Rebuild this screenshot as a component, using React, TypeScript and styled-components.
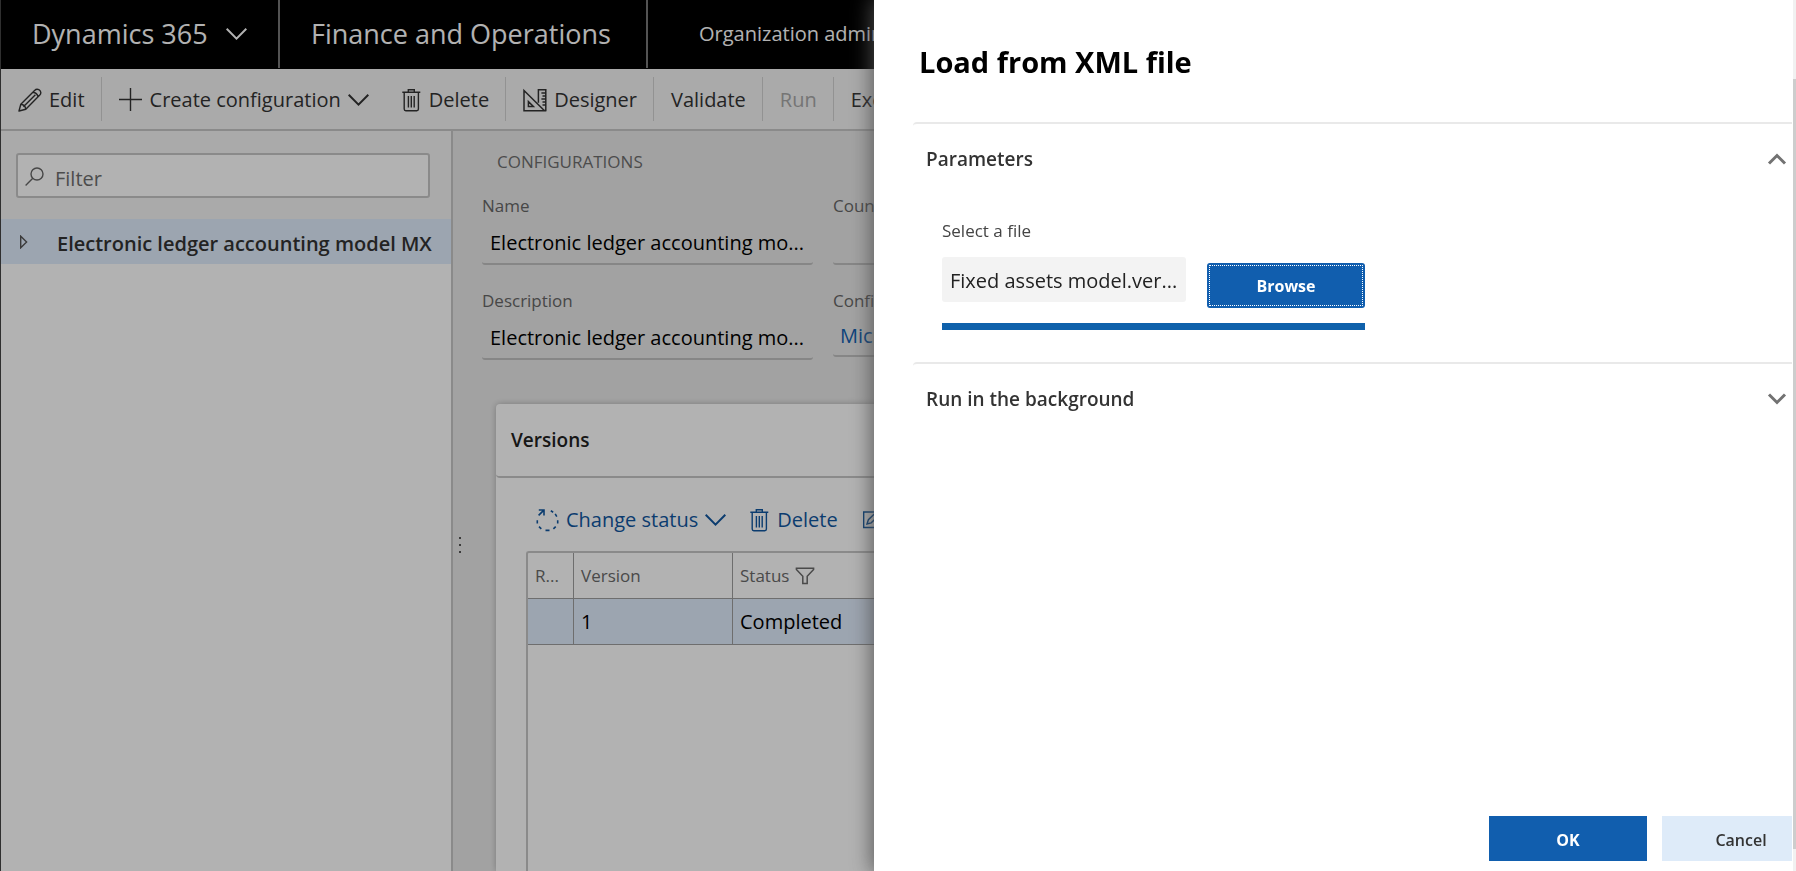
import React from "react";
import styled, { createGlobalStyle, css } from "styled-components";

const GlobalStyle = createGlobalStyle`
  *, *::before, *::after { box-sizing: border-box; }
  body {
    margin: 0;
    font-family: "Open Sans", "Noto Sans", sans-serif;
    font-size: 20px;
    line-height: 28px;
    color: #333;
    background: #fff;
  }
  button, input { font: inherit; color: inherit; }
  button { cursor: pointer; }
`;

/* ---------- page shell ---------- */

const Page = styled.div`
  display: flex;
  flex-direction: column;
  height: 100vh;
  overflow: hidden;
  border-left: 1px solid #444;
  background: #fff;
`;

const TopBar = styled.header`
  display: flex;
  flex: none;
  height: 69px;
  background: #000;
  color: #fff;
  white-space: nowrap;
`;

const BrandCell = styled.div<{ $min: number }>`
  display: flex;
  align-items: center;
  min-width: ${(p) => p.$min}px;
  height: 68px;
  padding-left: 31px;
  border-right: 2px solid #777;
  font-size: 27px;
`;

const BrandButton = styled.button`
  display: flex;
  align-items: center;
  gap: 18px;
  padding: 0;
  border: 0;
  background: none;
`;

const Breadcrumb = styled.nav`
  display: flex;
  align-items: center;
  height: 68px;
  padding-left: 51px;
`;

const ActionBar = styled.div`
  display: flex;
  flex: none;
  height: 62px;
  border-bottom: 2px solid #c6c6c6;
  background: #f4f4f4;
  white-space: nowrap;
`;

const ActionGroup = styled.div`
  display: flex;
  margin: 8px 0;
  border-right: 1px solid #d2d2d2;
`;

const ActionButton = styled.button`
  display: flex;
  align-items: center;
  gap: 7px;
  padding: 2px 16px 0 17px;
  border: 0;
  background: none;
  color: #333;

  &:disabled { color: #a8a8a8; }
`;

const Workspace = styled.div`
  display: flex;
  flex: 1;
  min-height: 0;
`;

/* ---------- configuration tree ---------- */

const TreePane = styled.aside`
  flex: none;
  width: 452px;
  border-right: 2px solid #c6c6c6;
`;

const FilterArea = styled.div`
  padding: 22px 21px 21px 15px;
  background: #f4f4f4;
`;

const FilterBox = styled.label`
  display: flex;
  align-items: center;
  gap: 10px;
  height: 45px;
  padding: 2px 0 0 7px;
  border: 2px solid #c6c6c6;
  border-radius: 3px;
  background: #fff;
  color: #666;
`;

const FilterInput = styled.input`
  flex: 1;
  min-width: 0;
  padding: 5px 0 0;
  border: 0;
  outline: 0;
  background: none;

  &::placeholder { color: #6e6e6e; opacity: 1; }
`;

const TreeRow = styled.button`
  display: flex;
  align-items: center;
  gap: 29px;
  width: 100%;
  height: 45px;
  padding: 0 0 0 18px;
  border: 0;
  background: #e0ecfc;
  font-weight: 600;
  white-space: nowrap;
`;

const TreeLabel = styled.span`
  padding-top: 5px;
`;

/* ---------- configuration details ---------- */

const Splitter = styled.div`
  display: flex;
  flex: none;
  flex-direction: column;
  gap: 5px;
  width: 14px;
  padding: 406px 0 0 6px;
  background: #e9e9e9;
`;

const Dot = styled.i`
  width: 2px;
  height: 2px;
  background: #555;
`;

const Details = styled.main`
  display: flex;
  flex: 1;
  flex-direction: column;
  min-width: 0;
  padding: 19px 0 0 15px;
  background: #e9e9e9;
`;

const Caption = styled.h2`
  margin: 0 0 20px 15px;
  font-size: 17px;
  font-weight: 400;
  line-height: 24px;
  color: #6e6e6e;
`;

const Fields = styled.div`
  display: grid;
  grid-template-columns: 331px 330px;
  gap: 24px 20px;
  margin-bottom: 44px;
`;

const Field = styled.div`
  display: flex;
  flex-direction: column;
  gap: 1px;
`;

const FieldLabel = styled.label`
  font-size: 17px;
  line-height: 24px;
  color: #666;
`;

const FieldInput = styled.input`
  width: 100%;
  height: 46px;
  padding: 3px 8px 0;
  border: 0;
  border-bottom: 2px solid #c0c0c0;
  border-radius: 3px;
  outline: 0;
  background: none;
  color: #000;
`;

const FieldLink = styled.a`
  height: 43px;
  padding: 8px 7px 0;
  border-bottom: 2px solid #c0c0c0;
  border-radius: 3px;
  color: #1160b0;
  text-decoration: none;
`;

const Card = styled.section`
  display: flex;
  flex: 1;
  flex-direction: column;
  margin-left: 14px;
  border-radius: 4px 0 0 0;
  background: #fff;
  box-shadow: 0 0 6px rgba(0, 0, 0, 0.25);
`;

const CardTitle = styled.h3`
  display: flex;
  align-items: center;
  flex: none;
  height: 74px;
  margin: 0;
  padding-left: 15px;
  border-bottom: 2px solid #c6c6c6;
  border-radius: 4px 0 0 4px;
  font-size: 19px;
  font-weight: 600;
  color: #222;
`;

const CardActions = styled.div`
  display: flex;
  flex: none;
  height: 46px;
  margin: 19px 0 8px 40px;
  gap: 24px;
  white-space: nowrap;
`;

const CardButton = styled.button`
  display: flex;
  align-items: center;
  gap: 7px;
  padding: 0;
  border: 0;
  background: none;
  color: #11579f;
`;

const GridFrame = styled.div`
  flex: 1;
  margin-left: 30px;
  border: solid #c6c6c6;
  border-width: 2px 0 0 2px;
  border-radius: 3px 0 0 0;
`;

const Grid = styled.table`
  width: 100%;
  border-spacing: 0;
  table-layout: fixed;
`;

const cell = css`
  height: 46px;
  padding: 1px 0 0 7px;
  border: solid #9e9e9e;
  border-width: 0 1px 1px 0;
  text-align: left;
  font-weight: 400;
`;

const HeadCell = styled.th<{ $width?: number }>`
  ${cell}
  width: ${(p) => (p.$width ? `${p.$width}px` : "auto")};
  font-size: 17px;
  color: #6a6a6a;
`;

const HeadContent = styled.span`
  display: flex;
  align-items: center;
  gap: 6px;
`;

const BodyCell = styled.td`
  ${cell}
  background: #e0ecfc;
  color: #000;
`;

/* ---------- dialog ---------- */

const Backdrop = styled.div`
  position: fixed;
  inset: 0;
  display: flex;
  padding-left: 874px;
  background: rgba(0, 0, 0, 0.3);
`;

const Dialog = styled.section`
  display: flex;
  flex: 1;
  min-width: 0;
  background: #fff;
  box-shadow: 0 0 20px 2px rgba(80, 80, 80, 0.9);
`;

const DialogBody = styled.form`
  display: flex;
  flex: 1;
  flex-direction: column;
  min-width: 0;
  margin-right: 1px;
  padding-left: 39px;
  overflow: hidden;
`;

const DialogTitle = styled.h1`
  margin: 0;
  padding: 42px 0 40px 6px;
  font-size: 29px;
  font-weight: 700;
  line-height: 40px;
  color: #000;
`;

const Section = styled.section`
  border-top: 2px solid #e9e9e9;
  border-radius: 4px 0 0 0;
`;

const SectionToggle = styled.button`
  display: flex;
  align-items: center;
  justify-content: space-between;
  width: 100%;
  height: 70px;
  padding: 0 4px 0 13px;
  border: 0;
  background: none;
  font-size: 19px;
  font-weight: 600;
  color: #333;
`;

const FilePicker = styled.div`
  display: grid;
  grid-template-columns: 244px 158px;
  column-gap: 21px;
  width: max-content;
  margin: 25px 0 32px 29px;
`;

const FileLabel = styled.label`
  grid-column: 1 / -1;
  margin-bottom: 14px;
  font-size: 17px;
  line-height: 24px;
  color: #444;
`;

const FileName = styled.input`
  width: 100%;
  height: 45px;
  padding: 1px 8px 0;
  border: 0;
  border-radius: 3px;
  outline: 0;
  background: #f3f3f3;
  color: #222;
`;

const DialogButton = styled.button<{ $kind: "primary" | "plain" }>`
  flex: none;
  width: 158px;
  height: 45px;
  padding: 2px 0 0;
  border: 0;
  background: ${(p) => (p.$kind === "primary" ? "#115eae" : "#deebf9")};
  color: ${(p) => (p.$kind === "primary" ? "#fff" : "#333")};
  font-size: 16px;
  font-weight: ${(p) => (p.$kind === "primary" ? 700 : 600)};
`;

const BrowseButton = styled(DialogButton)`
  margin-top: 6px;
  padding-top: 0;
  border-radius: 3px;
  outline: 1px dotted #fff;
  outline-offset: -3px;
`;

const UploadProgress = styled.progress`
  grid-column: 1 / -1;
  width: 100%;
  height: 7px;
  margin-top: 15px;
  border: 0;
  appearance: none;

  &::-webkit-progress-bar { background: #deebf9; }
  &::-webkit-progress-value { background: #0f61ab; }
`;

const DialogFooter = styled.footer`
  display: flex;
  justify-content: flex-end;
  gap: 15px;
  margin: auto -28px 10px 0;
`;

const ScrollTrack = styled.div`
  flex: none;
  width: 3px;
  padding: 79px 0 22px;
  background: #f1f1f1;
`;

const ScrollThumb = styled.div`
  height: 100%;
  background: #cdcdcd;
`;

/* ---------- icons ---------- */

const Icon = styled.svg`
  flex: none;
  fill: none;
  stroke: currentColor;
`;

const ChevronDown = () => (
  <Icon width="21" height="12" viewBox="0 0 21 12" strokeWidth="2">
    <path d="M.7.8 10.5 10.6 20.3.8" />
  </Icon>
);

const SectionChevron = ({ open }: { open: boolean }) => (
  <Icon width="22" height="14" viewBox="0 0 22 14" strokeWidth="3" color="#727272">
    <path d={open ? "M3 11.5 11 3.5 19 11.5" : "M3 2.5 11 10.5 19 2.5"} />
  </Icon>
);

const Pencil = () => (
  <Icon width="24" height="24" viewBox="0 0 24 24" strokeWidth="1.4" strokeLinejoin="round">
    <path d="M1 23 2.8 16.3 16.6 2.4C17.8 1.2 19.4.9 20.8 1.7 22.8 2.8 23.6 5.2 21.8 7.1L7.8 21.2 1 23ZM2.8 16.3C5.2 16.5 7.4 18.6 7.8 21.2M14.9 4.2C17.3 4.5 19.5 6.4 20 8.8M17.4 6.7 5.4 18.7" />
  </Icon>
);

const Plus = () => (
  <Icon width="24" height="24" viewBox="0 0 24 24" strokeWidth="1.4">
    <path d="M11.5 0v23M0 11.5h23" />
  </Icon>
);

const Trash = () => (
  <Icon width="20" height="24" viewBox="0 0 20 24" strokeWidth="1.4">
    <path d="M.3 4.2h18M6.3 4V1.7h6V4M2.2 4.5V21c0 1 .6 1.7 1.6 1.7h11c1 0 1.6-.7 1.6-1.7V4.5M6.4 8v11.5M9.3 8v11.5M12.2 8v11.5" />
  </Icon>
);

const Designer = () => (
  <Icon width="24" height="24" viewBox="0 0 24 24" strokeWidth="1.5">
    <path d="M1 2.5V22.8H21.5ZM5.4 13.6v4.9h5ZM15.4 14.8V1.8h7.4v20.8h-2M18.4 5h4M19.5 8h3M18.4 11h4M19.5 14h3M19.5 17h3" />
  </Icon>
);

const Search = () => (
  <Icon width="20" height="20" viewBox="0 0 20 20" strokeWidth="1.4">
    <circle cx="12" cy="7" r="6" />
    <path d="M7.8 11.2.6 18.4" />
  </Icon>
);

const ExpandMark = () => (
  <Icon width="9" height="14" viewBox="0 0 9 14" strokeWidth="1.4" color="#555">
    <path d="M1.7 1.2V12.8L7.6 7Z" />
  </Icon>
);

const ChangeStatus = () => (
  <Icon width="23" height="24" viewBox="0 0 23 24" strokeWidth="1.6">
    <path d="M2.8 2H8V7.4M7.6 2.4 2.6 7.4" />
    <path d="M1.3 12.2v3.4M3 18.6 5.3 20.9M9.5 22.4h4M17.4 20.9 19.7 18.6M21.7 15.6v-3.4M20.8 8.6 19.2 5.8M17.2 4.2 14.8 2.8" />
  </Icon>
);

const EditBox = () => (
  <Icon width="24" height="24" viewBox="0 0 24 24" strokeWidth="1.4">
    <path d="M14 4H1.7v15.5h15V10M5 16l1.4-4.3L17 1.5l3 3L9.2 14.8Z" />
  </Icon>
);

const Funnel = () => (
  <Icon width="20" height="18" viewBox="0 0 20 18" strokeWidth="1.5">
    <path d="M1.4 1.3H18.6V2.5L12.2 9.2V16.4H7.8V9.2L1.4 2.5Z" />
  </Icon>
);

export default function App() {
  return (
    <>
      <GlobalStyle />
      <Page>
        <TopBar>
          <BrandCell $min={279}>
            <BrandButton>
              Dynamics 365
              <ChevronDown />
            </BrandButton>
          </BrandCell>
          <BrandCell $min={368}>Finance and Operations</BrandCell>
          <Breadcrumb>Organization administration</Breadcrumb>
        </TopBar>

        <ActionBar>
          <ActionGroup>
            <ActionButton><Pencil />Edit</ActionButton>
          </ActionGroup>
          <ActionGroup>
            <ActionButton><Plus />Create configuration<ChevronDown /></ActionButton>
            <ActionButton><Trash />Delete</ActionButton>
          </ActionGroup>
          <ActionGroup>
            <ActionButton><Designer />Designer</ActionButton>
          </ActionGroup>
          <ActionGroup>
            <ActionButton>Validate</ActionButton>
          </ActionGroup>
          <ActionGroup>
            <ActionButton disabled>Run</ActionButton>
          </ActionGroup>
          <ActionGroup>
            <ActionButton>Exchange</ActionButton>
          </ActionGroup>
        </ActionBar>

        <Workspace>
          <TreePane>
            <FilterArea>
              <FilterBox>
                <Search />
                <FilterInput placeholder="Filter" aria-label="Filter" />
              </FilterBox>
            </FilterArea>
            <TreeRow>
              <ExpandMark />
              <TreeLabel>Electronic ledger accounting model MX</TreeLabel>
            </TreeRow>
          </TreePane>

          <Splitter><Dot /><Dot /><Dot /></Splitter>

          <Details>
            <Caption>CONFIGURATIONS</Caption>
            <Fields>
              <Field>
                <FieldLabel htmlFor="name">Name</FieldLabel>
                <FieldInput id="name" readOnly value="Electronic ledger accounting mo..." />
              </Field>
              <Field>
                <FieldLabel htmlFor="country">Country/region codes</FieldLabel>
                <FieldInput id="country" readOnly value="" />
              </Field>
              <Field>
                <FieldLabel htmlFor="description">Description</FieldLabel>
                <FieldInput id="description" readOnly value="Electronic ledger accounting mo..." />
              </Field>
              <Field>
                <FieldLabel as="span">Configuration provider</FieldLabel>
                <FieldLink href="#provider">Microsoft</FieldLink>
              </Field>
            </Fields>

            <Card>
              <CardTitle>Versions</CardTitle>
              <CardActions>
                <CardButton><ChangeStatus />Change status<ChevronDown /></CardButton>
                <CardButton><Trash />Delete</CardButton>
                <CardButton><EditBox />Edit</CardButton>
              </CardActions>
              <GridFrame>
                <Grid>
                  <thead>
                    <tr>
                      <HeadCell $width={46}>R...</HeadCell>
                      <HeadCell $width={159}>Version</HeadCell>
                      <HeadCell><HeadContent>Status<Funnel /></HeadContent></HeadCell>
                    </tr>
                  </thead>
                  <tbody>
                    <tr>
                      <BodyCell />
                      <BodyCell>1</BodyCell>
                      <BodyCell>Completed</BodyCell>
                    </tr>
                  </tbody>
                </Grid>
              </GridFrame>
            </Card>
          </Details>
        </Workspace>
      </Page>

      <Backdrop>
        <Dialog role="dialog" aria-modal="true" aria-labelledby="dialog-title">
          <DialogBody onSubmit={(e) => e.preventDefault()}>
            <DialogTitle id="dialog-title">Load from XML file</DialogTitle>
            <Section>
              <SectionToggle type="button" aria-expanded>
                Parameters
                <SectionChevron open />
              </SectionToggle>
              <FilePicker>
                <FileLabel htmlFor="file">Select a file</FileLabel>
                <FileName id="file" readOnly value="Fixed assets model.ver..." />
                <BrowseButton type="button" $kind="primary">Browse</BrowseButton>
                <UploadProgress value={100} max={100} aria-label="Upload" />
              </FilePicker>
            </Section>
            <Section>
              <SectionToggle type="button" aria-expanded={false}>
                Run in the background
                <SectionChevron open={false} />
              </SectionToggle>
            </Section>
            <DialogFooter>
              <DialogButton $kind="primary">OK</DialogButton>
              <DialogButton type="button" $kind="plain">Cancel</DialogButton>
            </DialogFooter>
          </DialogBody>
          <ScrollTrack><ScrollThumb /></ScrollTrack>
        </Dialog>
      </Backdrop>
    </>
  );
}
